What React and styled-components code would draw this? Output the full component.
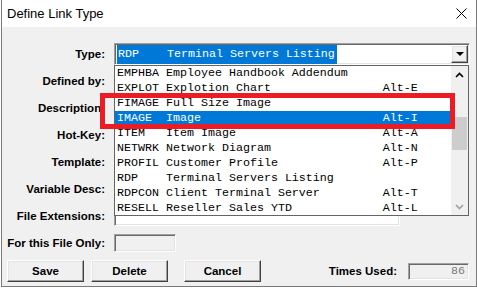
import React from 'react';
import styled, { createGlobalStyle } from 'styled-components';

const Global = createGlobalStyle`
  html, body { margin: 0; padding: 0; background: #ffffff; }
  body { width: 477px; height: 288px; overflow: hidden; font-family: "Liberation Sans", Arial, sans-serif; }
  * { box-sizing: border-box; }
`;

const Window = styled.div`
  margin-left: 1px;
  width: 476px;
  height: 287px;
  border: 1px solid #7a7a7a;
  border-top: none;
  background: #f0f0f0;
  display: flex;
  flex-direction: column;
`;

const TitleBar = styled.div`
  height: 27px;
  flex: none;
  background: #ffffff;
  display: flex;
  align-items: center;
  justify-content: space-between;
  padding-left: 5px;
`;

const Title = styled.span`
  font-family: "Liberation Sans", Arial, sans-serif;
  font-size: 13px;
  color: #000;
`;

const CloseBox = styled.div`
  width: 30px;
  height: 27px;
  display: flex;
  align-items: center;
  justify-content: center;
`;

const Body = styled.div`
  flex: 1;
  position: relative;
  padding-top: 13px;
  display: flex;
  flex-direction: column;
`;

const FormGrid = styled.div`
  display: grid;
  grid-template-columns: 103px 1fr;
  column-gap: 9px;
  grid-auto-rows: 27px;
  align-items: center;
`;

const Label = styled.div`
  text-align: right;
  font-weight: bold;
  font-size: 11.5px;
  color: #000;
  white-space: nowrap;
`;

const sunken = `
  border: 1px solid;
  border-color: #a0a0a0 #ffffff #ffffff #a0a0a0;
  box-shadow: inset 1px 1px 0 #696969, inset -1px -1px 0 #e3e3e3;
`;

const raised = `
  border: 1px solid;
  border-color: #ffffff #404040 #404040 #ffffff;
  box-shadow: inset -1px -1px 0 #a0a0a0, inset 1px 1px 0 #e3e3e3;
`;

const Field = styled.div`
  ${sunken}
  width: ${p => p.$w}px;
  height: ${p => p.$h || 20}px;
  background: ${p => (p.$disabled ? '#f0f0f0' : '#ffffff')};
`;

const Combo = styled.div`
  ${sunken}
  width: 356px;
  height: 22px;
  background: #ffffff;
  display: flex;
  align-items: center;
  padding: 2px 1px 1px 2px;
`;

const mono = `
  font-family: "Liberation Mono", "Courier New", monospace;
  font-size: 11.67px;
  white-space: pre;
`;

const ComboValue = styled.span`
  ${mono}
  background: #0078d7;
  color: #ffffff;
  height: 19px;
  line-height: 19px;
  padding: 0 2px 0 1px;
`;

const DropButton = styled.div`
  ${raised}
  margin-left: auto;
  width: 17px;
  height: 18px;
  background: #f0f0f0;
  display: flex;
  align-items: center;
  justify-content: center;
`;

const Triangle = styled.div`
  width: 0;
  height: 0;
  border-left: 4px solid transparent;
  border-right: 4px solid transparent;
  border-top: 4px solid #000;
`;

const DropList = styled.div`
  position: absolute;
  left: 112px;
  top: 38px;
  width: 355px;
  height: 151px;
  border: 1px solid #646464;
  background: #ffffff;
  display: flex;
`;

const Rows = styled.div`
  flex: 1;
  display: flex;
  flex-direction: column;
`;

const Row = styled.div`
  ${mono}
  height: 15px;
  line-height: 15px;
  padding-left: 2px;
  color: ${p => (p.$selected ? '#ffffff' : '#000000')};
  background: ${p => (p.$selected ? '#0078d7' : 'transparent')};
`;

const Scrollbar = styled.div`
  width: 17px;
  background: #f0f0f0;
  display: flex;
  flex-direction: column;
`;

const ScrollArrow = styled.div`
  height: 17px;
  flex: none;
  display: flex;
  align-items: center;
  justify-content: center;
`;

const Track = styled.div`
  flex: 1;
  display: flex;
  flex-direction: column;
`;

const Thumb = styled.div`
  height: 33px;
  margin: 0 1px;
  background: #cdcdcd;
`;

const Callout = styled.div`
  position: absolute;
  left: 98px;
  top: 66px;
  width: 355px;
  height: 36px;
  border: 5px solid #ed1c24;
`;

const ButtonRow = styled.div`
  display: flex;
  align-items: center;
  height: 22px;
  margin-top: 4px;
  padding: 0 7px 0 5px;
`;

const Button = styled.div`
  ${raised}
  width: 77px;
  height: 22px;
  margin-left: ${p => p.$gap || 0}px;
  background: #f0f0f0;
  display: flex;
  align-items: center;
  justify-content: center;
  font-weight: bold;
  font-size: 11.5px;
  color: #000;
`;

const Spacer = styled.div`
  flex: 1;
`;

const CountField = styled.div`
  ${sunken}
  width: 61px;
  height: 17px;
  margin-left: 11px;
  background: #f0f0f0;
  display: flex;
  align-items: center;
  justify-content: flex-end;
  padding-right: 3px;
  font-family: "Liberation Mono", "Courier New", monospace;
  font-size: 11.67px;
  color: #7a7a7a;
`;

const items = [
  ['EMPHBA', 'Employee Handbook Addendum', ''],
  ['EXPLOT', 'Explotion Chart', 'Alt-E'],
  ['FIMAGE', 'Full Size Image', ''],
  ['IMAGE', 'Image', 'Alt-I'],
  ['ITEM', 'Item Image', 'Alt-A'],
  ['NETWRK', 'Network Diagram', 'Alt-N'],
  ['PROFIL', 'Customer Profile', 'Alt-P'],
  ['RDP', 'Terminal Servers Listing', ''],
  ['RDPCON', 'Client Terminal Server', 'Alt-T'],
  ['RESELL', 'Reseller Sales YTD', 'Alt-L'],
];

const fields = [
  ['Defined by:', 150],
  ['Description:', 336],
  ['Hot-Key:', 60],
  ['Template:', 336],
  ['Variable Desc:', 336],
  ['File Extensions:', 286],
];

const Chevron = ({ up, color }) => (
  <svg width="9" height="6" viewBox="0 0 9 6">
    <polyline
      points={up ? '1,5 4.5,1.5 8,5' : '1,1 4.5,4.5 8,1'}
      fill="none"
      stroke={color}
      strokeWidth="1.6"
    />
  </svg>
);

export default function App() {
  return (
    <>
      <Global />
      <Window>
        <TitleBar>
          <Title>Define Link Type</Title>
          <CloseBox>
            <svg width="11" height="11" viewBox="0 0 11 11">
              <path d="M0.5 0.5 L10.5 10.5 M10.5 0.5 L0.5 10.5" stroke="#000" strokeWidth="1" />
            </svg>
          </CloseBox>
        </TitleBar>
        <Body>
          <FormGrid>
            <Label>Type:</Label>
            <Combo>
              <ComboValue>{'RDP    Terminal Servers Listing'}</ComboValue>
              <DropButton>
                <Triangle />
              </DropButton>
            </Combo>
            {fields.map(([label, w]) => (
              <React.Fragment key={label}>
                <Label>{label}</Label>
                <Field $w={w} />
              </React.Fragment>
            ))}
            <Label>For this File Only:</Label>
            <Field $w={62} $h={18} $disabled />
          </FormGrid>
          <ButtonRow>
            <Button>Save</Button>
            <Button $gap={7}>Delete</Button>
            <Button $gap={16}>Cancel</Button>
            <Spacer />
            <Label>Times Used:</Label>
            <CountField>86</CountField>
          </ButtonRow>

          <DropList>
            <Rows>
              {items.map(([code, desc, alt]) => (
                <Row key={code} $selected={code === 'IMAGE'}>
                  {code.padEnd(7) + desc.padEnd(31) + alt}
                </Row>
              ))}
            </Rows>
            <Scrollbar>
              <ScrollArrow>
                <Chevron up color="#000" />
              </ScrollArrow>
              <Track>
                <Thumb style={{ marginTop: 34 }} />
              </Track>
              <ScrollArrow>
                <Chevron color="#a0a0a0" />
              </ScrollArrow>
            </Scrollbar>
          </DropList>
          <Callout />
        </Body>
      </Window>
    </>
  );
}
